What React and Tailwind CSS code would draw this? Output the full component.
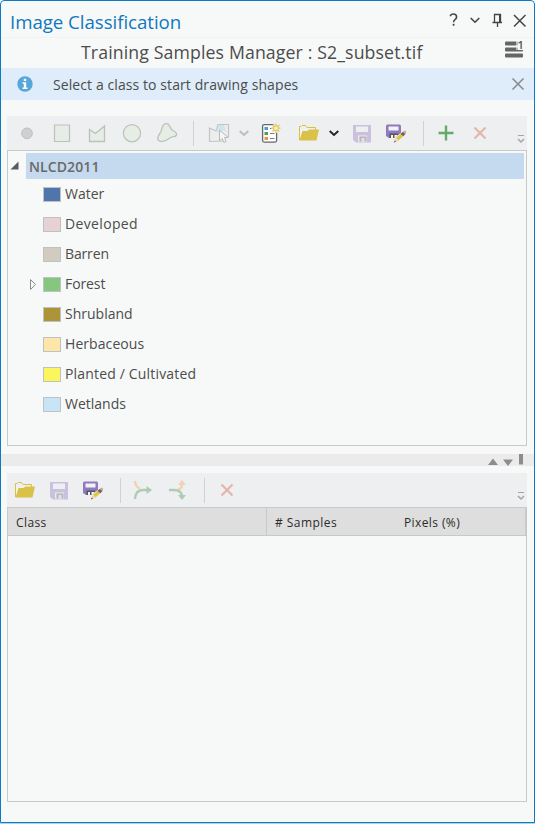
import React from "react";

function Icon({ children, className = "" }) {
  return (
    <svg width="22" height="22" viewBox="0 0 22 22" fill="none" className={"block shrink-0 " + className}>
      {children}
    </svg>
  );
}

function Separator({ className = "" }) {
  return <div className={"h-[25px] w-px shrink-0 bg-[#cfd1d3] " + className} />;
}

function Folder({ className }) {
  return (
    <Icon className={className}>
      <path d="M1.500 18V4.500H3L4 3.500H7.500L9 5.500H17.500V8.500" stroke="#d9c045" />
      <path d="M2 8H4L3 15H2Z" fill="#fbf6da" />
      <path d="M4.500 9H9.500L11.500 7.500H21L18.500 18.500H1.500Z" fill="#d9c247" />
    </Icon>
  );
}

function Save({ className }) {
  return (
    <Icon className={className}>
      <path fillRule="evenodd" d="M2 3H20V20.500H5L2 18ZM5 4.500V10H17V4.500ZM7 13.500V19.500H16V13.500Z" fill="#c9c1de" />
      <path d="M7.500 14H15.500V19.500H7.500Z" fill="#e4e4e6" />
      <path d="M8.500 14.500H15.500V19.500H13.500V16H10.500V19.500H8.500Z" fill="#b7b7ba" />
    </Icon>
  );
}

function SaveEdit({ className }) {
  return (
    <Icon className={className}>
      <path d="M1 3.500L2 2.500H15L16 3.500V16H4L1 14Z" fill="#8f7abd" />
      <path d="M3.500 4.500H13.500V8.500H3.500Z" fill="#f3f1f8" />
      <path d="M4.500 11.500H13V16H4.500Z" fill="#55565c" />
      <path d="M6 13H8V16H6ZM9.500 13H13L10 16.500H9.500Z" fill="#f5f5f5" />
      <path d="M8.500 21L10 16L18.500 8.500L21.500 11.500L13 19.500Z" fill="#eeeff1" />
      <path d="M11 16L16.500 11L19 13.500L13.500 18.500Z" fill="#dfc640" />
      <path d="M9 20.500L10.500 16.500L13 19Z" fill="#efcba0" />
      <path d="M9 20.500L9.700 18.600L10.900 19.800Z" fill="#555" />
      <path d="M15.500 11.800L18 9.700L20.500 12L18.200 14.300Z" fill="#66676b" />
      <path d="M18 9.700L19.300 8.800H20.500L21 9.700V11L20.300 12Z" fill="#e0a08f" />
    </Icon>
  );
}

function Remove({ className }) {
  return (
    <Icon className={className}>
      <path d="M5.500 5.500L16.500 16.500M16.500 5.500L5.500 16.500" stroke="#e4b5aa" strokeWidth="2.200" />
    </Icon>
  );
}

function Chevron({ color, className = "" }) {
  return (
    <svg width="12" height="8" viewBox="0 0 12 8" fill="none" className={"block shrink-0 " + className}>
      <path d="M1.700 2L6 6L10.300 2" stroke={color} strokeWidth="1.900" />
    </svg>
  );
}

function Overflow({ className = "" }) {
  return (
    <svg width="8" height="10" viewBox="0 0 8 10" fill="none" className={"block shrink-0 " + className}>
      <path d="M1 1.500H7" stroke="#a4a4a6" />
      <path d="M1 5L4 8L7 5" stroke="#a4a4a6" strokeWidth="1.500" />
    </svg>
  );
}

const classes = [
  { name: "Water", swatch: "bg-[#5074ac]", tracking: "tracking-normal" },
  { name: "Developed", swatch: "bg-[#e7d1d2]", tracking: "tracking-[0.350px]" },
  { name: "Barren", swatch: "bg-[#d2cbc0]", tracking: "tracking-[-0.150px]" },
  { name: "Forest", swatch: "bg-[#85c77e]", tracking: "tracking-[-0.100px]", expandable: true },
  { name: "Shrubland", swatch: "bg-[#ae9439]", tracking: "tracking-normal" },
  { name: "Herbaceous", swatch: "bg-[#fde6a8]", tracking: "tracking-[0.070px]" },
  { name: "Planted / Cultivated", swatch: "bg-[#fbf65d]", tracking: "tracking-[0.170px]" },
  { name: "Wetlands", swatch: "bg-[#c8e4f7]", tracking: "tracking-normal" },
];

export default function App() {
  return (
    <div className="h-[824px] w-[535px] overflow-hidden rounded-t-[4px] border-b border-[#a9d3ee] font-['Open_Sans','Noto_Sans',sans-serif] text-[#4c4c4c]">
      <div className="flex h-[823px] flex-col rounded-t-[4px] border border-[#0a7cc4] bg-[#f7f9f8]">
        <header className="flex h-[37px] shrink-0 items-center border-b border-[#f1f3f3] pt-[4px] pl-[9px]">
          <h1 className="w-[436px] pt-[2px] text-[18.700px] leading-[26px] tracking-[-0.050px] whitespace-nowrap text-[#0f78be]">Image Classification</h1>
          <svg width="84" height="22" viewBox="446 9 84 22" fill="none" className="-mt-[2px] block">
            <path d="M450.500 16.200V15.300Q451.300 14 453.300 14Q456.600 14 456.600 17Q456.600 18.500 455 19.700Q453.600 20.700 453.600 22.300" stroke="#444" strokeWidth="1.600" />
            <path d="M452.700 23.800H454.500V25.700H452.700Z" fill="#444" />
            <path d="M470.700 18L475 22.200L479.300 18" stroke="#444" strokeWidth="1.600" />
            <path d="M494.500 22V14.500H500.500V22M492.500 22.500H502M497.500 22.500V27" stroke="#444" strokeWidth="1.300" />
            <path d="M499 14H501V22H499Z" fill="#444" />
            <path d="M514 15L525.500 26.500M525.500 15L514 26.500" stroke="#444" strokeWidth="1.500" />
          </svg>
        </header>

        <div className="flex h-[30px] shrink-0 items-center pl-[80px]">
          <h2 className="w-[422px] pb-[2px] text-[17.700px] leading-[26px] tracking-[0.125px] whitespace-nowrap">Training Samples Manager : S2_subset.tif</h2>
          <svg width="22" height="22" viewBox="503 38 22 22" fill="none" className="-mt-[8px] block">
            <rect x="505" y="41.500" width="18" height="4" rx="1" fill="#666" />
            <rect x="505" y="47.500" width="18" height="4" rx="1" fill="#666" />
            <rect x="505" y="53.500" width="18" height="4" rx="1" fill="#666" />
            <path d="M516 39H525V50H516Z" fill="#f7f9f8" />
            <path d="M516 41.500H518V45.500H516ZM516 47.500H518V50H516Z" fill="#bbb" />
            <text x="517.500" y="49" fontSize="11" fontWeight="600" fill="#555">1</text>
          </svg>
        </div>

        <div className="flex h-[32px] shrink-0 items-center bg-[#deedf9] pl-[16px]">
          <svg width="16" height="16" viewBox="0 0 16 16" className="block">
            <circle cx="8" cy="8" r="7.700" fill="#56a6dc" />
            <path d="M6.800 2.800H9.200V5H6.800ZM5.500 6.200H9.200V11.500H10.500V13H5.500V11.500H6.800V7.700H5.500Z" fill="#fff" />
          </svg>
          <p className="ml-[20px] w-[458px] pt-[2px] text-[14px] leading-[20px] tracking-[0.090px] whitespace-nowrap">Select a class to start drawing shapes</p>
          <svg width="14" height="14" viewBox="0 0 14 14" fill="none" className="block">
            <path d="M1.500 1.500L12.500 12.500M12.500 1.500L1.500 12.500" stroke="#858a8e" strokeWidth="1.500" />
          </svg>
        </div>

        <div className="mt-[16px] ml-[6px] flex h-[34px] w-[520px] shrink-0 items-center bg-[#eeeff1] pl-[9px]">
          <Icon>
            <circle cx="11" cy="11.300" r="5.300" fill="#cfd0d1" stroke="#bcbdbe" />
          </Icon>
          <Icon className="ml-[13px]">
            <path d="M3.500 3H18.500V19.500H3.500Z" fill="#e6ede4" stroke="#bcc1bc" strokeWidth="1.200" />
          </Icon>
          <Icon className="ml-[13px]">
            <path d="M3.500 19.500V7.500L9.500 11.500L18.500 4V19.500Z" fill="#e6ede4" stroke="#bcc1bc" strokeWidth="1.300" />
          </Icon>
          <Icon className="ml-[13px]">
            <circle cx="11" cy="11.200" r="8.600" fill="#e6ede4" stroke="#bcc1bc" strokeWidth="1.200" />
          </Icon>
          <Icon className="ml-[13px]">
            <path d="M8 2.500C10 .9 12.500 1.500 13.500 4C14.500 6.500 15 8 17.500 9C20 10 21.300 12 20.300 13.500C19.200 15 16.500 14.300 14.500 15.500C12.500 16.800 11 18.600 7.500 19.200C3.500 20 1.300 18.500 1.800 15.500C2.300 12.500 5 11 5.500 8C5.900 5.500 6 4 8 2.500Z" fill="#e6ede4" stroke="#bcc1bc" strokeWidth="1.300" />
          </Icon>
          <Separator className="ml-[15px]" />
          <Icon className="ml-[14px]">
            <path d="M1.500 6L8 9L10 2.500H20.500V15L15 16V19L1.500 19.500Z" fill="#eceded" stroke="#c2c4c5" strokeWidth="1.200" />
            <path d="M10.500 3L16 3L18.500 10L15 8.500L11 12L8.500 8.500Z" fill="#d0e6ec" />
            <path d="M11.500 8V19L14 16.500L16 20.500L18 19.500L16.500 15.500H20Z" fill="#f4f5f5" stroke="#b8babb" />
          </Icon>
          <Chevron color="#bbbdbf" className="ml-[8px]" />
          <Icon className="ml-[10px]">
            <rect x="2.600" y="2.600" width="14" height="17.500" rx="1.500" fill="#fff" stroke="#66686c" strokeWidth="1.300" />
            <path d="M4.500 5H8V8H4.500Z" fill="#4b9bd4" />
            <path d="M4.500 10H8V13H4.500Z" fill="#51a058" />
            <path d="M4.500 15H8V18H4.500Z" fill="#e89440" />
            <path d="M10 6.500H14M10 11.500H14.500M10 16.500H14.500" stroke="#77797c" />
            <path d="M16 1.500V11M11.500 6.200H20.500M12.700 3L19.300 9.500M19.300 3L12.700 9.500" stroke="#eeeff1" strokeWidth="3" />
            <path d="M16 1.500V11M11.500 6.200H20.500M12.700 3L19.300 9.500M19.300 3L12.700 9.500" stroke="#dfc85a" strokeWidth="1.200" />
            <circle cx="16" cy="6.200" r="2.300" fill="#fbf1bd" stroke="#dfc85a" />
          </Icon>
          <Folder className="ml-[16px]" />
          <Chevron color="#242424" className="ml-[8px]" />
          <Save className="ml-[11px]" />
          <SaveEdit className="ml-[12px]" />
          <Separator className="ml-[16px]" />
          <Icon className="ml-[11px]">
            <path d="M11 3.500V18.500M3.500 11H18.500" stroke="#66aa69" strokeWidth="2.400" />
          </Icon>
          <Remove className="ml-[12px]" />
          <Overflow className="mt-[11px] ml-[26px]" />
        </div>

        <div className="ml-[6px] h-[296px] w-[520px] shrink-0 border border-[#c8c9c9] pt-[2px] text-[14px]">
          <div className="flex h-[26px] items-center">
            <svg width="18" height="12" viewBox="0 0 18 12" className="block shrink-0">
              <path d="M2.500 9.500H10.500V1.500Z" fill="#5a5a5a" />
            </svg>
            <div className="h-[26px] w-[498px] bg-[#c5daee] pl-[3px] leading-[27px] font-semibold tracking-[0.100px] text-[#696969]">NLCD2011</div>
          </div>
          <ul>
            {classes.map((item) => (
              <li key={item.name} className="flex h-[30px] items-center">
                <div className="w-[35px] shrink-0 pl-[20px]">
                  {item.expandable && (
                    <svg width="10" height="14" viewBox="0 0 10 14" fill="none" className="block">
                      <path d="M2.500 2.500L7.500 7.500L2.500 12.500Z" stroke="#8c8c8c" />
                    </svg>
                  )}
                </div>
                <div className={"mt-[1px] h-[15px] w-[18px] shrink-0 border border-[#bfc1c3] " + item.swatch} />
                <span className={"ml-[4px] leading-[20px] whitespace-nowrap " + item.tracking}>{item.name}</span>
              </li>
            ))}
          </ul>
        </div>

        <div className="mt-[8px] flex h-[12px] shrink-0 bg-[#ebebeb] pl-[484px]">
          <svg width="44" height="12" viewBox="485 454 44 12" className="block">
            <path d="M488 465L493 458.500L498 465ZM503 459.500H513L508 466ZM519 454H523V464.500H519Z" fill="#8d8d8d" />
          </svg>
        </div>

        <div className="mt-[7px] ml-[6px] flex h-[34px] w-[520px] shrink-0 items-center bg-[#eeeff1] pl-[7px]">
          <Folder />
          <Save className="ml-[12px]" />
          <SaveEdit className="ml-[12px]" />
          <Separator className="ml-[16px]" />
          <Icon className="ml-[11px]">
            <path d="M3 2Q3 7 8 10" stroke="#f1d2b3" strokeWidth="2.400" />
            <path d="M3 20Q3.500 11 11 11H16" stroke="#aecbb3" strokeWidth="2.400" />
            <path d="M14.500 7L20 11L14.500 15Z" fill="#aecbb3" />
          </Icon>
          <Icon className="ml-[13px]">
            <path d="M10 11Q15 10 15 5" stroke="#f1d2b3" strokeWidth="2.400" />
            <path d="M11 6L15 1L19 6Z" fill="#f1d2b3" />
            <path d="M2 11H7Q14 11 15 17" stroke="#aecbb3" strokeWidth="2.400" />
            <path d="M11 16H19L15 21Z" fill="#aecbb3" />
          </Icon>
          <Separator className="ml-[15px]" />
          <Remove className="ml-[11px]" />
          <Overflow className="mt-[11px] ml-[279px]" />
        </div>

        <div className="ml-[6px] h-[295px] w-[520px] shrink-0 border border-[#c8c9c9]">
          <div className="flex h-[28px] border-r border-b border-[#c8c9c9] bg-[#dedede] text-[12px] leading-[29px] text-[#2b2b2b]">
            <div className="w-[259px] border-r border-[#c8c9c9] pl-[8px] tracking-[0.400px]">Class</div>
            <div className="w-[129px] pl-[8px] tracking-[0.450px]"># Samples</div>
            <div className="pl-[8px] tracking-[0.400px]">Pixels (%)</div>
          </div>
        </div>
      </div>
    </div>
  );
}
